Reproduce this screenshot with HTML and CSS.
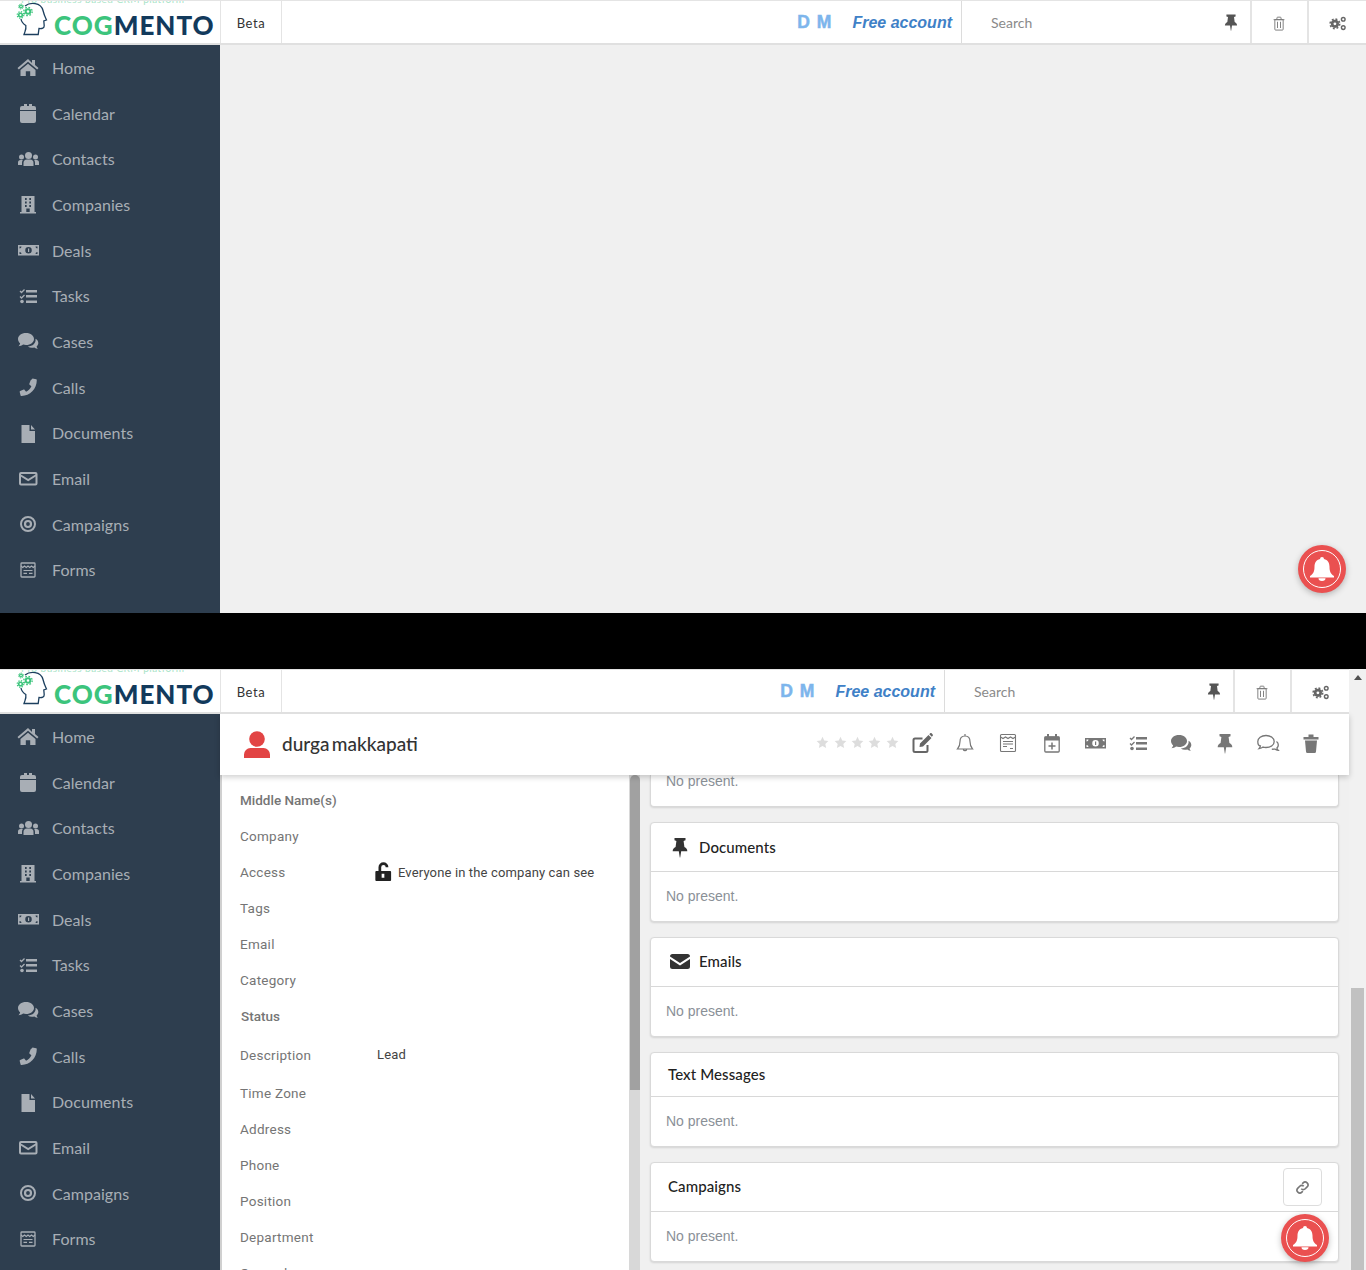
FILE: index.html
```html
<!DOCTYPE html>
<html lang="en">
<head>
  <meta charset="UTF-8" />
  <title>Cogmento CRM</title>
  <link rel="stylesheet" href="styles.css">
</head>
<body>
  <!-- icon sprite -->
  <svg class="sprite" width="0" height="0">
    <symbol id="i-home" viewBox="0 0 24 24"><path d="M12 4 1.500 13l1.300 1.600L12 6.800l9.200 7.800 1.300-1.600-3.500-3V5h-3v3zM4.500 15v6h5.300v-4.800h4.400V21h5.300v-6L12 8.700z"/></symbol>
    <symbol id="i-cal" viewBox="0 0 24 24"><path d="M4 10h16v10a2 2 0 0 1-2 2H6a2 2 0 0 1-2-2zM6 5h2V3h3v2h2V3h3v2h2a2 2 0 0 1 2 2v2H4V7a2 2 0 0 1 2-2z"/></symbol>
    <symbol id="i-users" viewBox="0 0 24 24"><circle cx="12.500" cy="8.500" r="3.500"/><path d="M7.500 19v-3a3.500 3.500 0 0 1 3.500-3.500h3a3.500 3.500 0 0 1 3.500 3.500v3z"/><circle cx="5.500" cy="10" r="2.500"/><circle cx="19.500" cy="10" r="2.500"/><path d="M2 18v-2.500A2.500 2.500 0 0 1 4.500 13h2.300a5 5 0 0 0-.8 3v2zM23 18v-2.500a2.500 2.500 0 0 0-2.500-2.500h-2.300a5 5 0 0 1 .8 3v2z"/></symbol>
    <symbol id="i-building" viewBox="0 0 24 24"><path fill-rule="evenodd" d="M5.500 4h13v16H20v1.500H4V20h1.500zM9 6v2h1.700V6zm4.300 0v2H15V6zM9 9.500v2h1.700v-2zm4.300 0v2H15v-2zM9 13v2h1.700v-2zm4.300 0v2H15v-2zm-3 3.500V20h3.400v-3.500z"/></symbol>
    <symbol id="i-money" viewBox="0 0 24 24"><path fill-rule="evenodd" d="M2 7h21v10.500H2zM3.500 8.500v2a2 2 0 0 0 2-2zm18 0h-2a2 2 0 0 0 2 2zM3.500 16h2a2 2 0 0 0-2-2zm18 0v-2a2 2 0 0 0-2 2zM12.500 9a3.200 3.200 0 1 0 0 6.500 3.200 3.200 0 0 0 0-6.500z"/><path d="M12 10.500h1.200V14H12z"/></symbol>
    <symbol id="i-tasks" viewBox="0 0 24 24"><path d="M10 6h11v2.400H10zM10 11h11v2.400H10zM10 16.500h11v2.400H10z"/><circle cx="6" cy="17.500" r="1.800"/><path d="M4 7l1.500 1.500L8.500 5.500M4 12.500l1.500 1.500 3-3" fill="none" stroke="currentColor" stroke-width="1.300"/></symbol>
    <symbol id="i-comments" viewBox="0 0 24 24"><path d="M10 4c4.700 0 8 2.700 8 6s-3.300 6-8 6c-1 0-2-.1-2.900-.4-1.300 1-3.100 1.600-4.600 1.700.9-1 1.500-2.100 1.600-3C2.800 13.200 2 11.700 2 10c0-3.300 3.300-6 8-6z"/><path d="M19.500 9.800c1.800 1 2.800 2.500 2.800 4.200 0 1.300-.6 2.500-1.700 3.400.1.800.6 1.600 1.300 2.400-1.300-.1-2.600-.6-3.600-1.400-.8.2-1.600.3-2.400.3-1.600 0-3-.4-4.100-1.200 4.800-.1 8.500-3.300 7.700-7.700z"/></symbol>
    <symbol id="i-phone" viewBox="0 0 24 24"><path d="M16.500 3.500l3.700.8c.4.100.6.400.6.800C20.800 14 14 21 5.500 21c-.4 0-.8-.2-.9-.6L3.700 17c-.1-.4.1-.8.500-.9l3.500-1.500c.3-.1.700 0 .9.300l1.500 1.900c2.400-1.200 4.200-3.100 5.300-5.500l-1.800-1.600c-.3-.2-.4-.6-.3-.9l1.500-3.700c.2-.4.500-.6.900-.6z"/></symbol>
    <symbol id="i-file" viewBox="0 0 24 24"><path d="M5.500 4h8v6h5.500v12H5.500zM15 4l4 4.500h-4z"/></symbol>
    <symbol id="i-mail" viewBox="0 0 24 24"><g fill="none" stroke="currentColor" stroke-width="2"><rect x="4" y="7" width="16.500" height="11.500" rx="1"/><path d="M4 9l8.200 5 8.200-5"/></g></symbol>
    <symbol id="i-target" viewBox="0 0 24 24"><g fill="none" stroke="currentColor"><circle cx="12" cy="12" r="7" stroke-width="2"/><circle cx="12" cy="12" r="3" stroke-width="2.200"/></g></symbol>
    <symbol id="i-form" viewBox="0 0 24 24"><g fill="none" stroke="currentColor"><rect x="5" y="5" width="14" height="14" rx=".8" stroke-width="1.300"/><path d="M5 8l1.750 1.500L8.500 8l1.750 1.500L12 8l1.750 1.500L15.500 8l1.750 1.500L19 8M7.500 12.500h9M7.500 15.300h3.500M13 15.300h3.500" stroke-width="1.200"/></g></symbol>
    <symbol id="i-notes" viewBox="0 0 24 24"><g fill="none" stroke="currentColor" stroke-width="1.100"><rect x="4.500" y="3.500" width="15" height="17" rx="1"/><path d="M4.500 6l2.500 1.500L9.500 6 12 7.500 14.500 6 17 7.500 19.500 6M7 10.500h10M7 13h10M7 15.500h4M14 17.500h3"/></g></symbol>
    <symbol id="i-pin" viewBox="0 0 24 24"><path d="M6.500 3h11v2.300L15.600 6l.8 6c1.900.9 2.900 2.300 2.900 4.200h-6.100l-1 6.300h-.4l-1-6.300H4.700c0-1.900 1-3.300 2.900-4.200l.8-6-1.900-.7z"/></symbol>
    <symbol id="i-trash-o" viewBox="0 0 24 24"><g fill="none" stroke="currentColor" stroke-width="1.100"><path d="M7 8h10v11.500a1 1 0 0 1-1 1H8a1 1 0 0 1-1-1zM5.500 8h13M9.500 8V6a1 1 0 0 1 1-1h3a1 1 0 0 1 1 1v2M10.200 10.500v7.500M13.800 10.500v7.500"/></g></symbol>
    <symbol id="i-gears" viewBox="0 0 24 24"><g fill="none" stroke="currentColor"><circle cx="9.500" cy="13" r="3.300" stroke-width="3.200"/><circle cx="9.500" cy="13" r="5.700" stroke-width="2" stroke-dasharray="2.240 2.240"/><circle cx="19.500" cy="7.500" r="2.200" stroke-width="1.700"/><circle cx="19.500" cy="17.500" r="2.200" stroke-width="1.700"/></g></symbol>
    <symbol id="i-user" viewBox="0 0 28 28"><circle cx="14" cy="9" r="7.800"/><path d="M1 28v-3.500A6.500 6.500 0 0 1 7.500 18h13a6.500 6.500 0 0 1 6.500 6.500V28z"/></symbol>
    <symbol id="i-star" viewBox="0 0 24 24"><path d="M12 1.500l3.200 7 7.600.9-5.600 5.200 1.500 7.500L12 18.300 5.300 22.100l1.500-7.500L1.200 9.400l7.600-.9z"/></symbol>
    <symbol id="i-edit" viewBox="0 0 24 24"><path d="M17.500 14v5.500a1.500 1.500 0 0 1-1.500 1.500H5a1.500 1.500 0 0 1-1.500-1.500V9A1.500 1.500 0 0 1 5 7.500h7.500" fill="none" stroke="currentColor" stroke-width="2"/><path d="M10 12.500l8.500-8.500 3 3-8.500 8.500-3.500.5zM19.300 3.200l.9-.9c.4-.4 1-.4 1.400 0l1.100 1.100c.4.400.4 1 0 1.400l-.9.900z"/></symbol>
    <symbol id="i-bell-o" viewBox="0 0 24 24"><g fill="none" stroke="currentColor" stroke-width="1.200"><path d="M12 5c-3.400 0-5 2.500-5 5.500 0 4-1 5.800-2.500 7.500h15c-1.500-1.700-2.500-3.500-2.500-7.500C17 7.500 15.400 5 12 5zM10.300 18.500a1.800 1.800 0 0 0 3.400 0M12 5V3"/></g></symbol>
    <symbol id="i-cal-plus" viewBox="0 0 24 24"><g fill="none" stroke="currentColor"><rect x="4.800" y="6" width="14.400" height="15" rx="1" stroke-width="1.300"/><path d="M12 11.500v7M8.500 15h7" stroke-width="1.500"/></g><path d="M4.500 5.500h2.500V3h2v2.500h6V3h2v2.500h2.500V9.500h-15z"/></symbol>
    <symbol id="i-comment-o" viewBox="0 0 24 24"><g fill="none" stroke="currentColor" stroke-width="1.300"><path d="M10 4.500c4.800 0 8.200 2.600 8.200 6s-3.400 6-8.200 6c-1 0-2-.1-2.900-.4-1 .8-2.600 1.400-4.100 1.600.8-.9 1.300-1.900 1.400-2.800C2.900 14.800 1.800 12.800 1.800 10.500 1.800 7.100 5.200 4.500 10 4.500z"/><path d="M20.500 10.500c1.200.9 1.800 2.100 1.800 3.400 0 1.100-.5 2.200-1.400 3 .1.900.5 1.700 1.200 2.400-1.300-.1-2.400-.6-3.300-1.300-1 .3-2 .3-3 .2"/></g></symbol>
    <symbol id="i-trash" viewBox="0 0 24 24"><path d="M4.500 6h15v2.500h-15zM9.500 3.500h5V6h-5zM6 9.500h12l-1 11a1.500 1.500 0 0 1-1.500 1.500h-7A1.500 1.500 0 0 1 7 20.500z"/></symbol>
    <symbol id="i-mail-solid" viewBox="0 0 24 24"><path d="M4.500 5h15A2.500 2.500 0 0 1 22 7.500L12 14 2 7.500A2.500 2.500 0 0 1 4.500 5zM2 10l10 6.500L22 10v7.500a2.500 2.500 0 0 1-2.500 2.500h-15A2.500 2.500 0 0 1 2 17.500z"/></symbol>
    <symbol id="i-lock" viewBox="0 0 20 24"><path fill-rule="evenodd" d="M2.500 11H18a1 1 0 0 1 1 1v9a1 1 0 0 1-1 1H2.500a1 1 0 0 1-1-1v-9a1 1 0 0 1 1-1zm6 3v4.500h3V14z"/><path d="M6.500 11V6.800a4 4 0 0 1 8 0" fill="none" stroke="currentColor" stroke-width="3"/></symbol>
    <symbol id="i-link" viewBox="0 0 24 24"><g fill="none" stroke="currentColor" stroke-width="2.600"><path d="M10 14a4.500 4.500 0 0 0 6.400 0l3-3A4.500 4.500 0 0 0 13 4.600l-1.500 1.500"/><path d="M14 10a4.500 4.500 0 0 0-6.400 0l-3 3a4.500 4.500 0 0 0 6.400 6.400l1.500-1.500"/></g></symbol>
    <symbol id="i-bell" viewBox="0 0 24 24"><path d="M12 0a2 2 0 0 1 2 2c3.800.9 5.500 3.800 5.500 7.500 0 5 1 7.200 4.500 9.500v1.500H0V19c3.500-2.300 4.500-4.500 4.500-9.500C4.500 5.800 6.200 2.900 10 2a2 2 0 0 1 2-2zM8.500 21.300h7a3.500 2.700 0 0 1-7 0z"/></symbol>
    <symbol id="i-logo" viewBox="0 0 34 36">
      <path d="M10 5C15 1 26 1 28 9.500c.8 3.500 1.800 6 3.500 9.500l-2.700 1 .4 4.500c.2 2.700-2 3.200-5.200 3l-.8 6H9c1-3.500 2.500-5 1.800-9C8.500 23 6.500 21 6 18" fill="none" stroke="#1c3f5e" stroke-width="1.300"/>
      <g fill="none" stroke="#3cc47c">
        <circle cx="13" cy="10.500" r="2.300" stroke-width="2"/><circle cx="13" cy="10.500" r="4.200" stroke-width="1.300" stroke-dasharray="1.650 1.650"/>
        <circle cx="5.500" cy="14" r="1.800" stroke-width="1.600"/><circle cx="5.500" cy="14" r="3.300" stroke-width="1.200" stroke-dasharray="1.300 1.290"/>
        <circle cx="6" cy="5.500" r="1.400" stroke-width="1.300"/><circle cx="6" cy="5.500" r="2.500" stroke-width="1" stroke-dasharray="1 .96"/>
      </g>
    </symbol>
  </svg>

  <!-- first capture: empty page -->
  <section class="screen screen-top">
    <header class="topbar">
      <div class="logo">
        <span class="logo-tag">Pro business based CRM platform</span>
        <svg class="logo-head"><use href="#i-logo"/></svg>
        <span class="logo-text"><b>COG</b>MENTO</span>
      </div>
      <div class="beta">Beta</div>
      <div class="account">
        <span class="initials">D M</span>
        <span class="plan">Free account</span>
      </div>
      <div class="search">
        <span>Search</span>
        <svg class="icon"><use href="#i-pin"/></svg>
      </div>
      <div class="tool tool-trash"><svg class="icon"><use href="#i-trash-o"/></svg></div>
      <div class="tool tool-gears"><svg class="icon"><use href="#i-gears"/></svg></div>
    </header>
    <div class="screen-body">
      <nav class="sidebar">
        <a class="nav-item"><svg class="icon"><use href="#i-home"/></svg>Home</a>
        <a class="nav-item"><svg class="icon"><use href="#i-cal"/></svg>Calendar</a>
        <a class="nav-item"><svg class="icon"><use href="#i-users"/></svg>Contacts</a>
        <a class="nav-item"><svg class="icon"><use href="#i-building"/></svg>Companies</a>
        <a class="nav-item"><svg class="icon"><use href="#i-money"/></svg>Deals</a>
        <a class="nav-item"><svg class="icon"><use href="#i-tasks"/></svg>Tasks</a>
        <a class="nav-item"><svg class="icon"><use href="#i-comments"/></svg>Cases</a>
        <a class="nav-item"><svg class="icon"><use href="#i-phone"/></svg>Calls</a>
        <a class="nav-item"><svg class="icon"><use href="#i-file"/></svg>Documents</a>
        <a class="nav-item"><svg class="icon"><use href="#i-mail"/></svg>Email</a>
        <a class="nav-item"><svg class="icon"><use href="#i-target"/></svg>Campaigns</a>
        <a class="nav-item"><svg class="icon"><use href="#i-form"/></svg>Forms</a>
      </nav>
      <main class="main"></main>
    </div>
    <div class="notify"><span class="notify-ring"><svg class="notify-bell"><use href="#i-bell"/></svg></span></div>
  </section>

  <div class="gap"></div>

  <!-- second capture: contact page, scrolled -->
  <section class="screen screen-bottom">
    <div class="screen-inner">
      <header class="topbar">
        <div class="logo">
          <span class="logo-tag">Pro business based CRM platform</span>
          <svg class="logo-head"><use href="#i-logo"/></svg>
          <span class="logo-text"><b>COG</b>MENTO</span>
        </div>
        <div class="beta">Beta</div>
        <div class="account">
          <span class="initials">D M</span>
          <span class="plan">Free account</span>
        </div>
        <div class="search">
          <span>Search</span>
          <svg class="icon"><use href="#i-pin"/></svg>
        </div>
        <div class="tool tool-trash"><svg class="icon"><use href="#i-trash-o"/></svg></div>
        <div class="tool tool-gears"><svg class="icon"><use href="#i-gears"/></svg></div>
      </header>
      <div class="screen-body">
        <nav class="sidebar">
          <a class="nav-item"><svg class="icon"><use href="#i-home"/></svg>Home</a>
          <a class="nav-item"><svg class="icon"><use href="#i-cal"/></svg>Calendar</a>
          <a class="nav-item"><svg class="icon"><use href="#i-users"/></svg>Contacts</a>
          <a class="nav-item"><svg class="icon"><use href="#i-building"/></svg>Companies</a>
          <a class="nav-item"><svg class="icon"><use href="#i-money"/></svg>Deals</a>
          <a class="nav-item"><svg class="icon"><use href="#i-tasks"/></svg>Tasks</a>
          <a class="nav-item"><svg class="icon"><use href="#i-comments"/></svg>Cases</a>
          <a class="nav-item"><svg class="icon"><use href="#i-phone"/></svg>Calls</a>
          <a class="nav-item"><svg class="icon"><use href="#i-file"/></svg>Documents</a>
          <a class="nav-item"><svg class="icon"><use href="#i-mail"/></svg>Email</a>
          <a class="nav-item"><svg class="icon"><use href="#i-target"/></svg>Campaigns</a>
          <a class="nav-item"><svg class="icon"><use href="#i-form"/></svg>Forms</a>
        </nav>
        <main class="main contact">
          <div class="contact-head">
            <svg class="contact-avatar"><use href="#i-user"/></svg>
            <h1 class="contact-name">durga makkapati</h1>
            <div class="contact-actions">
              <div class="stars">
                <svg class="star"><use href="#i-star"/></svg>
                <svg class="star"><use href="#i-star"/></svg>
                <svg class="star"><use href="#i-star"/></svg>
                <svg class="star"><use href="#i-star"/></svg>
                <svg class="star"><use href="#i-star"/></svg>
              </div>
              <svg class="icon action-dark"><use href="#i-edit"/></svg>
              <svg class="icon"><use href="#i-bell-o"/></svg>
              <svg class="icon"><use href="#i-notes"/></svg>
              <svg class="icon"><use href="#i-cal-plus"/></svg>
              <svg class="icon"><use href="#i-money"/></svg>
              <svg class="icon"><use href="#i-tasks"/></svg>
              <svg class="icon"><use href="#i-comments"/></svg>
              <svg class="icon"><use href="#i-pin"/></svg>
              <svg class="icon"><use href="#i-comment-o"/></svg>
              <svg class="icon"><use href="#i-trash"/></svg>
            </div>
          </div>
          <div class="contact-body">
            <div class="fields">
              <div class="field field-strong"><span class="field-label">Middle Name(s)</span></div>
              <div class="field"><span class="field-label">Company</span></div>
              <div class="field">
                <span class="field-label">Access</span>
                <span class="field-value"><svg class="lock"><use href="#i-lock"/></svg>Everyone in the company can see</span>
              </div>
              <div class="field"><span class="field-label">Tags</span></div>
              <div class="field"><span class="field-label">Email</span></div>
              <div class="field"><span class="field-label">Category</span></div>
              <div class="field field-strong field-status"><span class="field-label">Status</span></div>
              <div class="field field-tall">
                <span class="field-label">Description</span>
                <span class="field-value field-lead">Lead</span>
              </div>
              <div class="field"><span class="field-label">Time Zone</span></div>
              <div class="field"><span class="field-label">Address</span></div>
              <div class="field"><span class="field-label">Phone</span></div>
              <div class="field"><span class="field-label">Position</span></div>
              <div class="field"><span class="field-label">Department</span></div>
              <div class="field"><span class="field-label">General</span></div>
            </div>
            <div class="col-scroll"><div class="col-thumb"></div></div>
            <div class="related">
              <div class="card card-cut"><div class="card-body">No present.</div></div>
              <div class="card">
                <div class="card-head"><svg class="icon"><use href="#i-pin"/></svg>Documents</div>
                <div class="card-body">No present.</div>
              </div>
              <div class="card">
                <div class="card-head card-head-mail"><svg class="icon"><use href="#i-mail-solid"/></svg>Emails</div>
                <div class="card-body">No present.</div>
              </div>
              <div class="card">
                <div class="card-head card-head-plain">Text Messages</div>
                <div class="card-body">No present.</div>
              </div>
              <div class="card">
                <div class="card-head card-head-btn">Campaigns
                  <button class="link-btn"><svg class="link-icon"><use href="#i-link"/></svg></button>
                </div>
                <div class="card-body">No present.</div>
              </div>
            </div>
          </div>
        </main>
      </div>
    </div>
    <div class="page-scroll">
      <span class="page-arrow"></span>
      <div class="page-thumb"></div>
    </div>
    <div class="notify"><span class="notify-ring"><svg class="notify-bell"><use href="#i-bell"/></svg></span></div>
  </section>
</body>
</html>
```

FILE: styles.css
```css
* {
  box-sizing: border-box;
}
html, body {
  margin: 0;
  height: 1270px;
  overflow: hidden;
}
body {
  font-family: "Lato", sans-serif;
  background: #000;
}
svg {
  display: block;
  fill: currentColor;
}
.sprite {
  position: absolute;
}
.icon {
  width: 24px;
  height: 24px;
  flex: none;
}
.gap {
  height: 56px;
  background: #000;
}

/* one capture of the app */
.screen {
  position: relative;
  display: flex;
  overflow: hidden;
  background: #f0f0f0;
}
.screen-top {
  height: 613px;
  flex-direction: column;
}
.screen-bottom {
  height: 601px;
}
.screen-inner {
  flex: 1;
  min-width: 0;
  display: flex;
  flex-direction: column;
}
.screen-body {
  flex: 1;
  min-height: 0;
  display: flex;
}
.main {
  flex: 1;
  min-width: 0;
}

/* header */
.topbar {
  position: relative;
  z-index: 3;
  flex: none;
  height: 45px;
  display: flex;
  align-items: stretch;
  background: #fff;
  border-top: 1px solid #e4e4e4;
  border-bottom: 2px solid #e0e0e0;
  overflow: hidden;
}
.logo {
  position: relative;
  width: 220px;
  flex: none;
  display: flex;
  padding-left: 15px;
}
.logo-tag {
  position: absolute;
  left: 21px;
  top: -8px;
  font-size: 10px;
  letter-spacing: .5px;
  color: #a9e4c7;
  white-space: nowrap;
}
.logo-head {
  width: 34px;
  height: 36px;
  flex: none;
}
.logo-text {
  margin: 8px 0 0 5px;
  font-size: 26px;
  line-height: 32px;
  font-weight: 900;
  letter-spacing: 1px;
  color: #123a5c;
  white-space: nowrap;
}
.logo-text b {
  color: #3cc47c;
}
.beta {
  width: 62px;
  flex: none;
  display: flex;
  align-items: center;
  justify-content: center;
  padding-top: 1px;
  border-left: 1px solid #e4e4e4;
  border-right: 1px solid #e4e4e4;
  font-size: 13px;
  letter-spacing: .6px;
  color: #333;
}
.account {
  flex: 1;
  display: flex;
  align-items: center;
  justify-content: flex-end;
  padding: 1px 9px 0 0;
  font-family: "Liberation Sans", sans-serif;
  font-weight: bold;
}
.initials {
  font-size: 17.5px;
  word-spacing: 2px;
  color: #7db5ec;
  -webkit-text-stroke: .5px #7db5ec;
  margin-right: 21px;
}
.plan {
  font-size: 16px;
  font-style: italic;
  color: #3f81c7;
}
.search {
  width: 289px;
  flex: none;
  display: flex;
  align-items: center;
  justify-content: space-between;
  padding: 0 9px 0 29px;
  border-left: 1px solid #dcdcdc;
  font-size: 14px;
  color: #8a8a8a;
}
.search .icon {
  width: 20px;
  height: 20px;
  margin-top: -1px;
  color: #555;
}
.tool {
  flex: none;
  display: flex;
  align-items: center;
  justify-content: center;
  padding: 2px 1px 0 0;
  border-left: 2px solid #e4e4e4;
  color: #777;
}
.tool-trash {
  width: 57px;
}
.tool-gears {
  width: 59px;
  color: #666;
}
.tool .icon {
  width: 20px;
  height: 20px;
}

/* sidebar */
.sidebar {
  width: 220px;
  flex: none;
  margin-top: -.4px;
  background: #2e3e4f;
}
.nav-item {
  height: 45.67px;
  display: flex;
  align-items: center;
  gap: 12px;
  padding-left: 16px;
  font-size: 16px;
  letter-spacing: .05px;
  color: #a8aeb5;
}

/* contact page */
.contact {
  display: flex;
  flex-direction: column;
}
.contact-head {
  position: relative;
  z-index: 2;
  flex: none;
  height: 61px;
  display: flex;
  align-items: center;
  padding: 0 26px 2px 23px;
  background: #fff;
  box-shadow: 0 2px 6px rgba(0, 0, 0, .2);
}
.contact-avatar {
  width: 28px;
  height: 28px;
  color: #e24444;
}
.contact-name {
  margin: 0 0 0 11px;
  font-size: 19px;
  font-weight: 500;
  word-spacing: -2.5px;
  color: #333;
}
.contact-actions {
  margin: -2px 0 0 auto;
  display: flex;
  align-items: center;
  gap: 19.22px;
  color: #777;
}
.action-dark {
  color: #666;
}
.stars {
  display: flex;
  gap: 4.4px;
  margin-right: -8px;
  color: #ddd;
}
.star {
  width: 13px;
  height: 13px;
}
.contact-body {
  flex: 1;
  min-height: 0;
  display: flex;
}

/* fields on the left */
.fields {
  width: 409px;
  flex: none;
  padding: 7px 0 0 18px;
  background: #fff;
  border-left: 2px solid #d0d0d0;
  font-family: "Roboto", sans-serif;
  font-size: 13.5px;
  letter-spacing: .25px;
}
.field {
  height: 36px;
  display: flex;
  align-items: center;
}
.field-tall {
  height: 41px;
  padding-top: 1px;
}
.field-label {
  width: 135px;
  flex: none;
  color: #757575;
}
.field-strong .field-label {
  font-weight: 500;
  letter-spacing: 0;
}
.field-status {
  padding-left: 1px;
}
.field-value {
  display: flex;
  align-items: center;
  color: #444;
  font-size: 13px;
  letter-spacing: .14px;
}
.field-lead {
  margin: -2px 0 0 2px;
}
.lock {
  width: 18px;
  height: 22px;
  margin: 0 6px 0 -1px;
  color: #222;
}
.col-scroll {
  width: 11px;
  flex: none;
  background: #d8d8d8;
}
.col-thumb {
  height: 315px;
  margin-left: 1px;
  background: #a1a1a1;
  border-radius: 5px 5px 0 0;
}

/* cards on the right */
.related {
  flex: 1;
  min-width: 0;
  padding: 0 10px;
  display: flex;
  flex-direction: column;
  gap: 15px;
}
.card {
  flex: none;
  background: #fff;
  border: 1px solid #d9d9d9;
  border-radius: 4px;
  box-shadow: 0 1px 2px rgba(0, 0, 0, .12);
}
.card-cut {
  height: 32px;
  border-top: 0;
  border-radius: 0 0 4px 4px;
  overflow: hidden;
}
.card-cut .card-body {
  height: 12px;
  padding-bottom: 0;
  line-height: 12px;
}
.card-head {
  height: 49px;
  display: flex;
  align-items: center;
  gap: 7px;
  padding-left: 17px;
  border-bottom: 1px solid #d8d8d8;
  font-size: 15px;
  font-weight: 500;
  letter-spacing: .1px;
  color: #222;
}
.card-head-mail {
  padding-bottom: 2px;
}
.card-head-plain {
  height: 44px;
  padding-bottom: 2px;
}
.card-head-btn {
  justify-content: space-between;
  padding-right: 16px;
  padding-bottom: 2px;
}
.card-head .icon {
  color: #333;
}
.card-body {
  height: 49px;
  display: flex;
  align-items: center;
  padding: 0 0 2px 15px;
  font-family: "Liberation Sans", sans-serif;
  font-size: 14px;
  color: #8a9097;
}
.link-btn {
  width: 39px;
  height: 38px;
  margin-top: 2px;
  display: flex;
  align-items: center;
  justify-content: center;
  padding: 0;
  background: #fff;
  border: 1px solid #ddd;
  border-radius: 4px;
}
.link-icon {
  width: 15px;
  height: 15px;
  color: #777;
}

/* window scrollbar */
.page-scroll {
  width: 17px;
  flex: none;
  display: flex;
  flex-direction: column;
  align-items: center;
  background: #f1f1f1;
}
.page-arrow {
  margin-top: 6px;
  border-left: 4px solid transparent;
  border-right: 4px solid transparent;
  border-bottom: 5px solid #505050;
}
.page-thumb {
  width: 13px;
  flex: 1;
  margin-top: 308px;
  background: #c1c1c1;
}

/* red bell over the page */
.notify {
  position: absolute;
  z-index: 4;
  width: 48px;
  height: 48px;
  display: flex;
  align-items: center;
  justify-content: center;
  background: #ea5050;
  border-radius: 50%;
  box-shadow: 0 2px 6px rgba(0, 0, 0, .25);
}
.screen-top .notify {
  right: 20px;
  bottom: 20px;
}
.screen-bottom .notify {
  right: 37px;
  bottom: 8px;
}
.notify-ring {
  width: 38px;
  height: 38px;
  display: flex;
  align-items: center;
  justify-content: center;
  border: 1.5px solid #fff;
  border-radius: 50%;
}
.notify-bell {
  width: 24px;
  height: 24px;
  color: #fff;
}
```
